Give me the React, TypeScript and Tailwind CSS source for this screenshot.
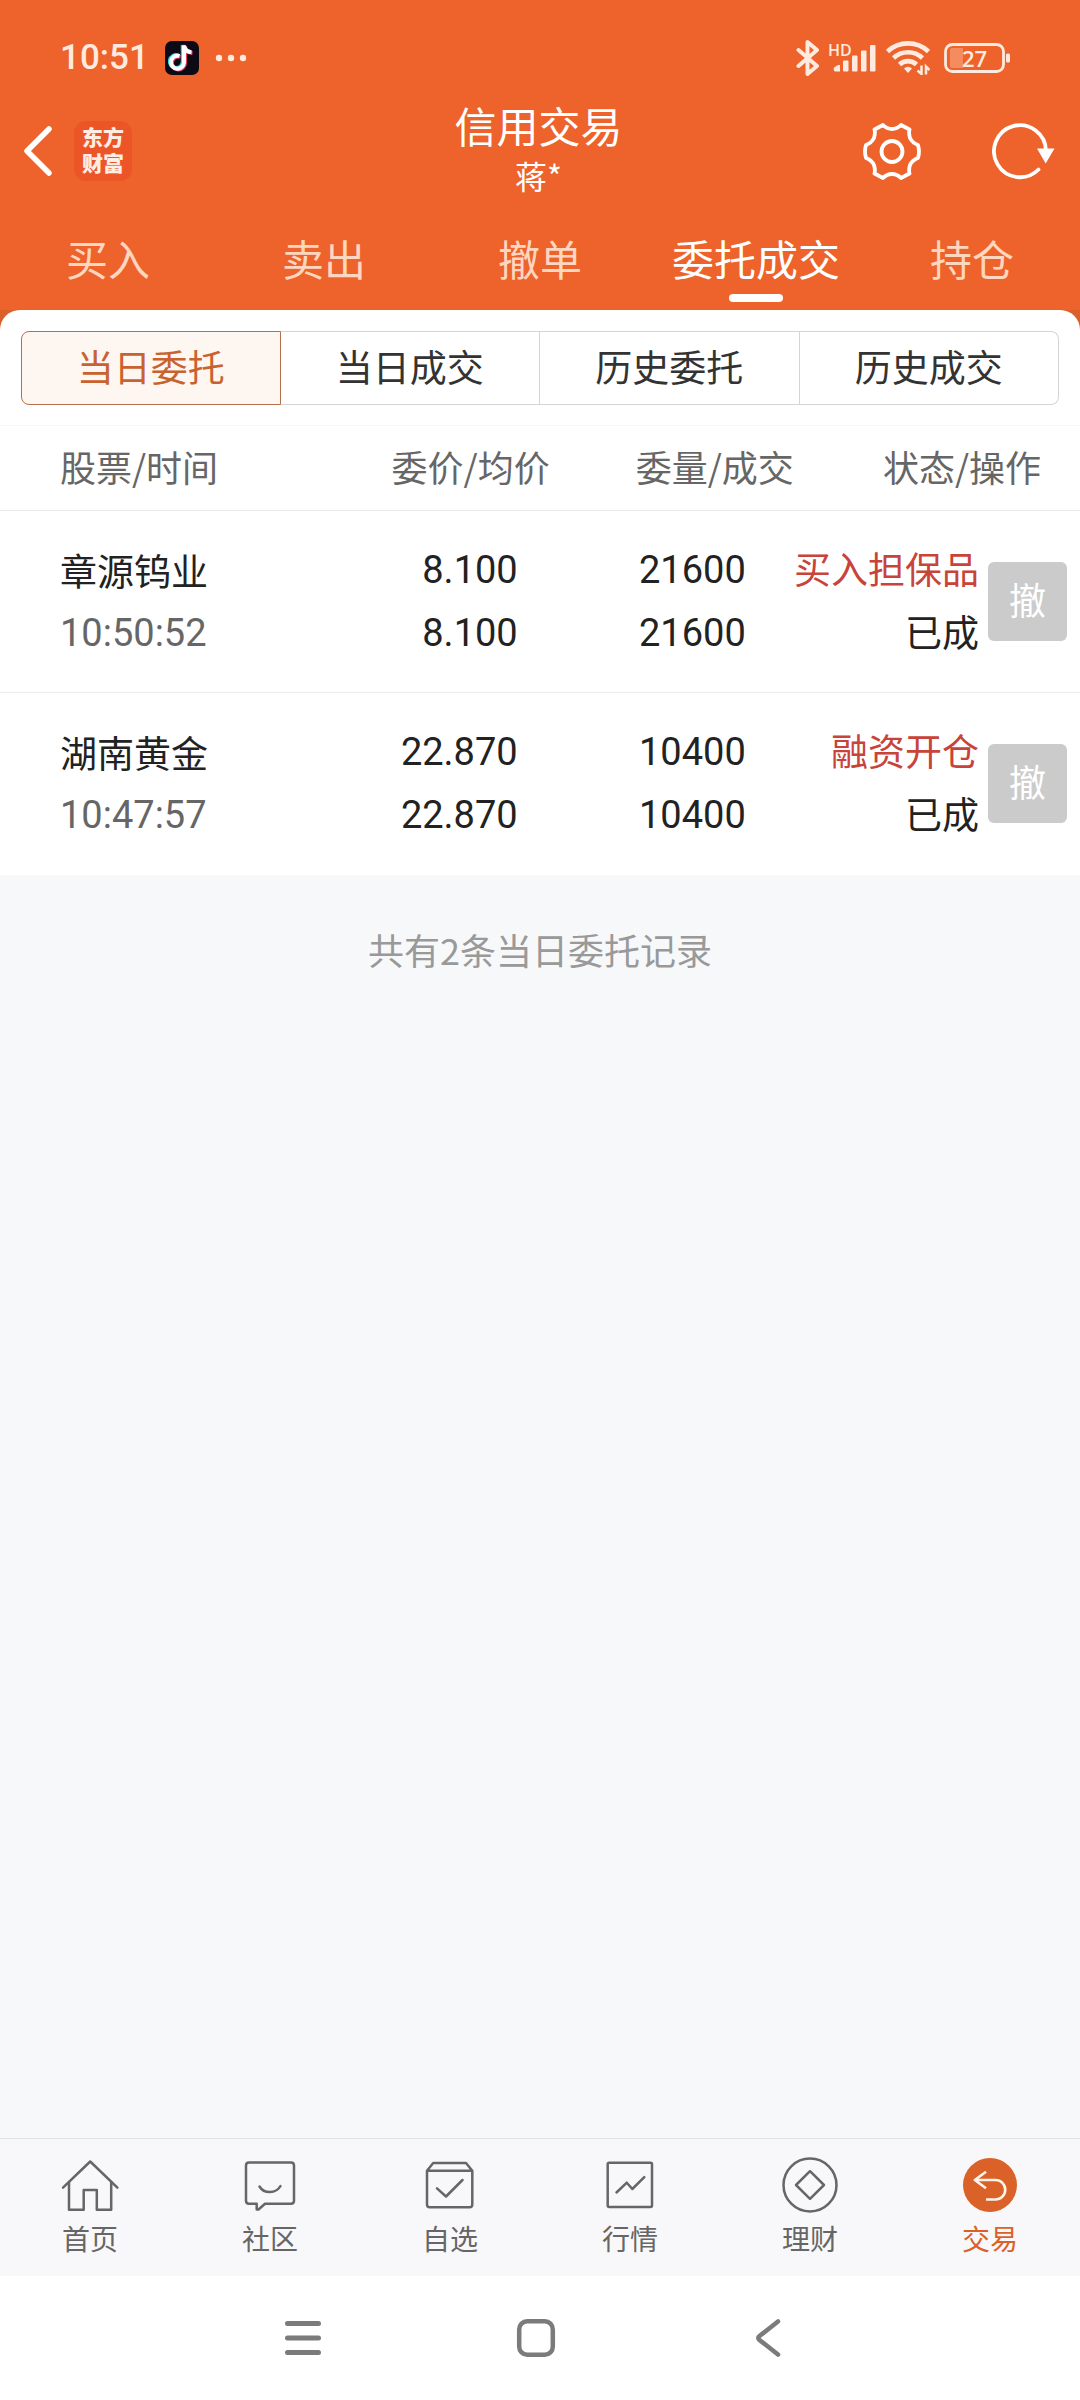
import type { ReactNode } from "react";

const tabs = ["买入", "卖出", "撤单", "委托成交", "持仓"];
const segments = ["当日委托", "当日成交", "历史委托", "历史成交"];

const orders = [
  { name: "章源钨业", time: "10:50:52", price: "8.100", avg: "8.100", qty: "21600", filled: "21600", kind: "买入担保品", state: "已成" },
  { name: "湖南黄金", time: "10:47:57", price: "22.870", avg: "22.870", qty: "10400", filled: "10400", kind: "融资开仓", state: "已成" },
];

function StatusBar() {
  return (
    <div className="flex h-[84px] items-center justify-between pt-8 pr-[68px] pl-[60px] text-[#ffeadf]">
      <div className="flex items-center">
        <span className="font-['Roboto'] text-[35px] leading-[52px] font-medium">10:51</span>
        <svg className="ml-4 size-[34px]" viewBox="0 0 34 34" aria-label="抖音">
          <rect width="34" height="34" rx="7" fill="#0c0a14" />
          <g fill="none" strokeWidth="4">
            <path d="M14.500 15a6.500 6.500 0 1 0 4.500 6.200V4.500c.5 4 3.500 6.500 7.500 6.800" stroke="#38d8dc" transform="translate(-1.200 -.6)" />
            <path d="M14.500 15a6.500 6.500 0 1 0 4.500 6.200V4.500c.5 4 3.500 6.500 7.500 6.800" stroke="#ee3a5c" transform="translate(1 .8)" />
            <path d="M14.500 15a6.500 6.500 0 1 0 4.500 6.200V4.500c.5 4 3.500 6.500 7.500 6.800" stroke="#fff" />
          </g>
        </svg>
        <svg className="ml-4 h-2 w-8" viewBox="0 0 32 8" fill="currentColor" aria-hidden="true">
          <circle cx="4" cy="4" r="3.200" />
          <circle cx="16" cy="4" r="3.200" />
          <circle cx="28" cy="4" r="3.200" />
        </svg>
      </div>
      <div className="flex items-center">
        <svg className="h-[38px] w-6" viewBox="0 0 24 38" fill="none" stroke="currentColor" strokeWidth="4" strokeLinejoin="round" strokeLinecap="round" aria-label="蓝牙">
          <path d="M2.500 11 21 27 11.500 35V3L21 11 2.500 27" />
        </svg>
        <div className="relative ml-2 h-[30px] w-[50px]">
          <span className="absolute top-0 left-0 font-['Open_Sans'] text-[16px] leading-[14px] font-semibold">HD</span>
          <svg className="size-full" viewBox="0 0 50 30" fill="currentColor" aria-label="信号">
            <path d="M6 24.500l4-2.500h2v6.500H7q-2-1-1-4z" />
            <rect x="15" y="17.500" width="5.500" height="11" rx="1" />
            <rect x="24" y="12.500" width="5.500" height="16" rx="1" />
            <rect x="33" y="7.500" width="5.500" height="21" rx="1" />
            <rect x="42" y="2" width="5.500" height="26.500" rx="1" />
          </svg>
        </div>
        <svg className="ml-2 h-[34px] w-[44px]" viewBox="0 0 44 34" fill="none" stroke="currentColor" strokeWidth="4.600" aria-label="无线网络">
          <path d="M1.500 10.500a30 30 0 0 1 41 0" />
          <path d="M7.500 17a21 21 0 0 1 29 0" />
          <path d="M13.500 23.500a12.500 12.500 0 0 1 17 0" />
          <path d="M22 32l-4-4.500q4-3.500 8 0z" fill="currentColor" stroke="none" />
          <path d="M35.500 24.500v8.500l-4-3.500M40 33.500v-8l3.500 3.500" strokeWidth="2.500" />
        </svg>
        <div className="relative ml-3.5 h-[30px] w-[68px]">
          <svg className="size-full" viewBox="0 0 68 30" aria-label="电量">
            <rect x="1.500" y="1.500" width="58" height="27" rx="7" fill="none" stroke="currentColor" strokeWidth="2.800" />
            <path d="M8 5h11v20H8q-2 0-2-2V7q0-2 2-2z" fill="#f48c60" />
            <rect x="62" y="10.500" width="4" height="9" rx="1.500" fill="currentColor" />
          </svg>
          <span className="absolute inset-y-0 left-0 w-[61px] text-center font-['Open_Sans'] text-[22px] leading-[30px] font-semibold">27</span>
        </div>
      </div>
    </div>
  );
}

function TitleBar() {
  return (
    <div className="grid h-[134px] grid-cols-[1fr_auto_1fr] items-center pr-[25px] pl-[22px] text-white">
      <div className="flex items-center gap-5">
        <button aria-label="返回">
          <svg className="h-[52px] w-8" viewBox="0 0 32 52" fill="none" stroke="currentColor" strokeWidth="5.500" strokeLinecap="round" strokeLinejoin="round">
            <path d="M27 4 5 26 27 48" />
          </svg>
        </button>
        <div className="flex h-[60px] w-[58px] items-center justify-center rounded-xl bg-[#eb5527] pb-1 text-center font-['Noto_Sans_CJK_SC',sans-serif] text-[21px] leading-[26px] font-black text-[#ffece2]">
          东方
          <br />
          财富
        </div>
      </div>
      <h1 className="pb-1 text-center text-[42px] leading-[52px]">
        信用交易
        <span className="block text-[32px] leading-[48px]">蒋*</span>
      </h1>
      <div className="flex items-center justify-end gap-[71px]">
        <button aria-label="设置">
          <svg className="h-[57px] w-[58px]" viewBox="0 0 58 57" fill="none" stroke="currentColor" strokeWidth="3.800" strokeLinejoin="round">
            <path d="M20 2Q24 6 29 6Q34 6 38 2L46.500 6.500Q45.500 10 47 15Q49.500 20 55 22Q57 28.500 55 35Q49.500 37 47 42Q45.500 47 46.500 50.500L38 55Q34 51 29 51Q24 51 20 55L11.500 50.500Q12.500 47 11 42Q8.500 37 3 35Q1 28.500 3 22Q8.500 20 11 15Q12.500 10 11.500 6.500Z" />
            <circle cx="29" cy="28.500" r="10.500" />
          </svg>
        </button>
        <button aria-label="刷新">
          <svg className="h-[57px] w-[63px]" viewBox="0 0 63 57" fill="none" stroke="currentColor" strokeWidth="3.800">
            <path d="M46.500 46.500A26 26 0 1 1 54 28" strokeLinecap="round" />
            <path d="M45 25.500H62.500L53.700 40.500Z" fill="currentColor" stroke="none" />
          </svg>
        </button>
      </div>
    </div>
  );
}

function OrderTable() {
  return (
    <table className="w-full table-fixed border-t border-[#f7f7f7] bg-white">
      <colgroup>
        <col className="w-[33.300%]" />
        <col className="w-[17.600%]" />
        <col className="w-[22.600%]" />
        <col className="w-[26.500%]" />
      </colgroup>
      <thead>
        <tr className="h-[85px] border-b border-[#e9e9e9] text-right text-[36px] whitespace-nowrap text-[#666]">
          <th className="pb-1 pl-[60px] text-left font-normal">股票/时间</th>
          <th className="pb-1 font-normal">委价/均价</th>
          <th className="pb-1 font-normal">委量/成交</th>
          <th className="pr-[39px] pb-1 font-normal">状态/操作</th>
        </tr>
      </thead>
      <tbody>
        {orders.map((o) => (
          <tr key={o.name} className="h-[182px] border-b border-[#ececec] text-right text-[37px] leading-[63px] whitespace-nowrap text-[#222] last:border-b-0">
            <td className="pl-[60px] text-left">
              <div>{o.name}</div>
              <div className="font-['Roboto'] text-[38px] text-[#666]">{o.time}</div>
            </td>
            <td className="pr-8 font-['Roboto'] text-[38px]">
              <div>{o.price}</div>
              <div>{o.avg}</div>
            </td>
            <td className="pr-12 font-['Roboto'] text-[38px]">
              <div>{o.qty}</div>
              <div>{o.filled}</div>
            </td>
            <td className="pr-[13px]">
              <div className="flex items-center justify-end gap-[9px]">
                <div className="pb-1">
                  <div className="text-[#c8433a]">{o.kind}</div>
                  <div>{o.state}</div>
                </div>
                <button className="size-[79px] shrink-0 rounded-md bg-[#cbcbcb] pb-1 text-[37px] text-white">撤</button>
              </div>
            </td>
          </tr>
        ))}
      </tbody>
    </table>
  );
}

const navItems: { label: string; icon: ReactNode }[] = [
  {
    label: "首页",
    icon: (
      <>
        <path d="M3 33.700 30.200 7.500 57.400 33.700" />
        <path d="M9 28V55.700H23.700V36H36.800V55.700H51.200V28" />
      </>
    ),
  },
  {
    label: "社区",
    icon: (
      <>
        <path d="M9 8.500H51Q54 8.500 54 11.500V46.700Q54 49.700 51 49.700H25L18.500 55.500H16.700V49.700H9Q6 49.700 6 46.700V11.500Q6 8.500 9 8.500Z" />
        <path d="M19.500 32.500C24 40 36 40 40.500 32" />
      </>
    ),
  },
  {
    label: "自选",
    icon: (
      <>
        <path d="M7 16.700 13.200 9H46L52.300 16.700V50.500Q52.300 53.300 49.500 53.300H9.800Q7 53.300 7 50.500ZM7 16.700H52.300" />
        <path d="M17 34.300 26 42.500 42.500 26" />
      </>
    ),
  },
  {
    label: "行情",
    icon: (
      <>
        <rect x="7.700" y="8.700" width="44.300" height="44.300" rx="1.500" />
        <path d="M16.500 38.500 26.800 28.700 32.300 35 44.300 23.200" />
      </>
    ),
  },
  {
    label: "理财",
    icon: (
      <>
        <circle cx="30" cy="31" r="26.500" />
        <path d="M30 17.200 44 31 30 44.800 16 31Z" />
      </>
    ),
  },
  {
    label: "交易",
    icon: (
      <>
        <circle cx="30" cy="31" r="27" fill="currentColor" stroke="none" />
        <path d="M26 17.700 14.800 26 26 34.300M15 26H35.500A9.500 9.500 0 0 1 35.500 45.500H26" stroke="#fff3ea" strokeWidth="2.600" strokeLinecap="butt" />
      </>
    ),
  },
];

function BottomNav() {
  return (
    <nav className="grid grid-cols-6 border-t border-[#e2e2e4] bg-[#f8f8fa] pt-[15px] pb-[18px]">
      {navItems.map((item) => (
        <a
          key={item.label}
          href="#"
          className={item.label === "交易" ? "flex flex-col items-center gap-1 text-[#da6127]" : "flex flex-col items-center gap-1 text-[#666]"}
        >
          <svg className="size-[60px]" viewBox="0 0 60 60" fill="none" stroke="currentColor" strokeWidth="2.500" strokeLinecap="round" strokeLinejoin="round" aria-hidden="true">
            {item.icon}
          </svg>
          <span className="text-[28px] leading-10">{item.label}</span>
        </a>
      ))}
    </nav>
  );
}

function SystemNav() {
  return (
    <div className="flex h-[124px] items-center justify-center gap-[193px] bg-white pr-[9px] text-[#7b7b7b]">
      <button aria-label="最近任务">
        <svg className="size-10" viewBox="0 0 40 40" fill="none" stroke="currentColor" strokeWidth="5" strokeLinecap="round">
          <path d="M4.500 5.500H35.500M4.500 20H35.500M4.500 34.500H35.500" />
        </svg>
      </button>
      <button aria-label="主屏幕">
        <svg className="size-10" viewBox="0 0 40 40" fill="none" stroke="currentColor" strokeWidth="4.500">
          <rect x="3.200" y="3.200" width="33.600" height="33.600" rx="8" />
        </svg>
      </button>
      <button aria-label="返回上一级">
        <svg className="size-10" viewBox="0 0 40 40" fill="none" stroke="currentColor" strokeWidth="4.500" strokeLinecap="round" strokeLinejoin="round">
          <path d="M29 3.500 10.500 18Q8 20 10.500 22L29 36.500" />
        </svg>
      </button>
    </div>
  );
}

export default function App() {
  return (
    <div className="flex min-h-screen flex-col bg-[#f7f8fa] font-['Noto_Sans_CJK_SC',sans-serif]">
      <header className="bg-[#ed632b]">
        <StatusBar />
        <TitleBar />
        <nav className="grid h-[92px] grid-cols-5">
          {tabs.map((t) =>
            t === "委托成交" ? (
              <button key={t} className="relative pb-3.5 text-[42px] text-white">
                {t}
                <span className="absolute bottom-2 left-1/2 h-2 w-[54px] -translate-x-1/2 rounded-full bg-white" />
              </button>
            ) : (
              <button key={t} className="pb-3.5 text-[42px] text-[#ffd6bf]">
                {t}
              </button>
            ),
          )}
        </nav>
      </header>
      <main className="flex-1">
        <div className="bg-[#d9602b]">
          <div className="rounded-t-[20px] bg-white px-[21px] pt-[21px] pb-5">
            <div className="grid h-[74px] grid-cols-4 text-[37px] text-[#333]">
              {segments.map((s, i) => (
                <button
                  key={s}
                  className={
                    i === 0
                      ? "rounded-l-lg border border-[#b5714c] bg-[#fdf6f1] pb-0.5 text-[#c9622f]"
                      : "border border-l-0 border-[#d4d4d4] pb-0.5 last:rounded-r-lg"
                  }
                >
                  {s}
                </button>
              ))}
            </div>
          </div>
        </div>
        <OrderTable />
        <p className="pt-12 text-center text-[36px] leading-[52px] text-[#999]">共有2条当日委托记录</p>
      </main>
      <BottomNav />
      <SystemNav />
    </div>
  );
}
